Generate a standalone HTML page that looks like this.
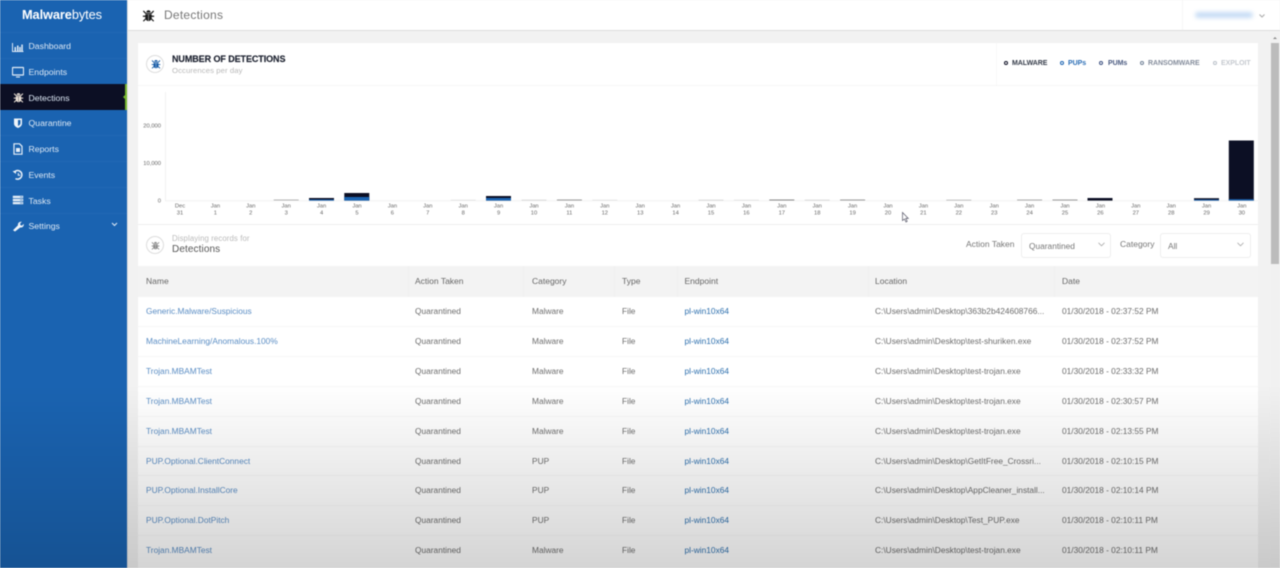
<!DOCTYPE html>
<html><head><meta charset="utf-8"><title>Detections</title>
<style>
html,body{margin:0;padding:0;width:1280px;height:568px;overflow:hidden;background:#f2f2f2;font-family:"Liberation Sans",sans-serif}
#w{position:absolute;left:0;top:0;width:1280px;height:568px;overflow:hidden;filter:blur(.45px)}
.a{position:absolute;white-space:nowrap}
#side{position:absolute;left:0;top:0;width:127px;height:568px;background:#1a63b1}
.n{position:absolute;left:28.5px;font-size:8.7px;color:#dce8f5;line-height:12px}
.d{position:absolute;left:0;width:127px;height:1px;background:#2169b5}
.ic{position:absolute;left:12px;width:12px;height:12px}
.h{position:absolute;font-size:8.5px;color:#666;top:276px;line-height:10px}
.c{position:absolute;font-size:8.35px;color:#6d6d6d;line-height:10px;white-space:nowrap}
.l{color:#5a8dc4}.e{color:#2c6fae}
.r{position:absolute;left:138px;width:1120px;height:1px;background:#f7f7f7}
.s{position:absolute;top:266px;width:1px;height:31px;background:#f0f0f0}
.lg{position:absolute;top:60px;font-size:7px;font-weight:bold;line-height:8px;white-space:nowrap}
.dot{position:absolute;top:60.5px;width:2px;height:2px;border-radius:50%;border:1.8px solid #000;background:#fff}
.sel{position:absolute;top:233px;height:25px;background:#fff;border:1px solid #eee;border-radius:3px;box-sizing:border-box;font-size:8.35px;color:#777;line-height:24px;padding-left:7px}
.sel svg{position:absolute;top:8px}
</style></head><body><div id="w">

<svg width="0" height="0" style="position:absolute"><defs>
<symbol id="bug" viewBox="0 0 12 12"><path d="M4 3.200a2 2 0 0 1 4 0zM3.200 3.700h5.600v1.100H3.200zM3 5.100h2.800v6.100C4.200 11 3 9.500 3 7.700zM6.200 5.100H9v2.600c0 1.800-1.200 3.300-2.800 3.500z" fill="currentColor"/><path d="M1.200 1.800l2.200 2.200M10.800 1.800L8.600 4M.8 6.700h2.400M11.200 6.700H8.800M1.200 11.200l2.300-2.200M10.800 11.200L8.500 9" stroke="currentColor" stroke-width="1.100" fill="none"/></symbol>
</defs></svg>

<!-- header -->
<div class="a" style="left:127px;top:0;width:1153px;height:31px;background:#fff;border-bottom:1px solid #ddd;box-sizing:border-box"></div>
<div class="a" style="left:1182px;top:0;width:1px;height:30px;background:#f7f7f7"></div>
<svg class="a" style="left:142px;top:9px;color:#1c1c1c" width="13" height="13"><use href="#bug" width="13" height="13"/></svg>
<div class="a" style="left:164px;top:8px;font-size:12px;line-height:15px;color:#777;letter-spacing:.25px">Detections</div>
<div class="a" style="left:1195px;top:12px;width:58px;height:6px;background:#c6dcf5;border-radius:3px;filter:blur(2px)"></div>
<svg class="a" style="left:1259px;top:14px" width="6" height="4"><path d="M.5.5L3 3 5.500.5" fill="none" stroke="#aaa"/></svg>

<!-- sidebar -->
<div id="side">
<div class="a" style="left:22px;top:7px;font-size:12.800px;line-height:16px;color:#fff;font-weight:bold;letter-spacing:-.1px">Malware<span style="font-weight:normal">bytes</span></div>
<div class="d" style="top:32px"></div><div class="d" style="top:58px"></div><div class="d" style="top:135px"></div><div class="d" style="top:161px"></div><div class="d" style="top:187px"></div><div class="d" style="top:213px"></div>
<div class="a" style="left:0;top:84px;width:127px;height:26px;background:#0c0f24"></div>
<div class="a" style="left:124.500px;top:84px;width:2.500px;height:26px;background:#76b82e"></div>
<div class="a" style="left:122.500px;top:95px;width:0;height:0;border:2.500px solid transparent;border-right-color:#76b82e;border-left:0"></div>

<svg class="ic" style="top:41px" viewBox="0 0 12 12"><path d="M.5 2v8.500h11" fill="none" stroke="#dce8f5"/><path d="M2.500 6h1.500v4H2.500zM5 4.500h1.500V10H5zM7.200 6h1.500v4H7.200zM9.300 3.500h1.500V10H9.300z" fill="#dce8f5"/></svg>
<div class="n" style="top:40px">Dashboard</div>
<svg class="ic" style="top:66px" viewBox="0 0 12 12"><path d="M1 1.500h10a.6.6 0 0 1 .6.6v6.300a.6.600 0 0 1-.6.6H1a.6.600 0 0 1-.6-.6V2.100A.6.600 0 0 1 1 1.500z" fill="none" stroke="#e6eff8" stroke-width="1.300"/><path d="M4 10.500h4v1H4z" fill="#e6eff8"/></svg>
<div class="n" style="top:66px">Endpoints</div>
<svg class="ic" style="top:92px;left:12.500px;color:#f0e6da" width="11" height="11"><use href="#bug" width="11" height="11"/></svg>
<div class="n" style="top:92px">Detections</div>
<svg class="ic" style="top:117px" viewBox="0 0 12 12"><path d="M2 1.500h8v5c0 2.200-1.800 3.600-4 4.500-2.200-.9-4-2.300-4-4.500z" fill="#eef4fa"/><path d="M6 3h2.500v3.300C8.500 7.500 7.300 8.400 6 9z" fill="#1a63b1"/></svg>
<div class="n" style="top:117px">Quarantine</div>
<svg class="ic" style="top:143px" viewBox="0 0 12 12"><path d="M2 .8h5.500L10 3.300V11.200H2z" fill="none" stroke="#e6eff8" stroke-width="1.200"/><path d="M4 5h4v4H4z" fill="#e6eff8"/></svg>
<div class="n" style="top:143px">Reports</div>
<svg class="ic" style="top:169px" viewBox="0 0 12 12"><path d="M2 3.500A4.300 4.300 0 1 1 3.500 9.600" fill="none" stroke="#eef4fa" stroke-width="1.500"/><path d="M.5 2h3.500v3z" fill="#eef4fa"/><path d="M6.300 4v2.300h2" fill="none" stroke="#eef4fa"/></svg>
<div class="n" style="top:169px">Events</div>
<svg class="ic" style="top:194px" viewBox="0 0 12 12"><path d="M.8 1.800h10.400v2.300H.8zM.8 4.900h10.400v2.300H.8zM.8 8h10.400v2.300H.8z" fill="#e6eff8"/><path d="M8 2.400h2.500v1H8zM8 5.500h2.500v1H8zM8 8.600h2.500v1H8z" fill="#7fa8d5"/></svg>
<div class="n" style="top:195px">Tasks</div>
<svg class="ic" style="top:220px" viewBox="0 0 12 12"><path d="M1 10.200L6 5.300C5.500 3.400 7.300 1.200 9.800 1.800L8 3.700l.5 1.500 1.500.4 1.700-1.700c.5 2.400-1.500 4-3.500 3.600L3 11.500z" fill="#eef4fa"/></svg>
<div class="n" style="top:220px">Settings</div>
<svg class="a" style="left:110.500px;top:222px" width="7" height="5"><path d="M1 1l2.500 2.500L6 1" fill="none" stroke="#dce8f5" stroke-width="1.100"/></svg>
</div>
<div class="a" style="left:127px;top:0;width:1px;height:568px;background:#e2e2e2"></div>

<!-- scrollbar -->
<div class="a" style="left:1270px;top:32px;width:10px;height:536px;background:#f1f1f1"></div>
<div class="a" style="left:1270.500px;top:43px;width:8.500px;height:221px;background:#bcbcbc"></div>
<div class="a" style="left:1272.500px;top:37px;width:0;height:0;border:2.500px solid transparent;border-bottom-color:#888;border-top:0"></div>

<!-- card -->
<div class="a" style="left:138px;top:43px;width:1120px;height:525px;background:#fff"></div>
<div class="a" style="left:138px;top:85px;width:1120px;height:1px;background:#f6f6f6"></div>
<div class="a" style="left:996px;top:43px;width:1px;height:42px;background:#f8f8f8"></div>
<div class="a" style="left:146px;top:55px;width:18px;height:18px;border:1px solid #ddd;border-radius:50%;box-sizing:border-box"></div>
<svg class="a" style="left:150.500px;top:58.500px;color:#1a5ea8" width="10" height="10"><use href="#bug" width="10" height="10"/></svg>
<div class="a" style="left:172px;top:54px;font-size:9px;line-height:11px;font-weight:bold;color:#1d2230;letter-spacing:-.08px;-webkit-text-stroke:.15px #1d2230">NUMBER OF DETECTIONS</div>
<div class="a" style="left:172px;top:66px;font-size:7.700px;line-height:9px;color:#b9b9b9;letter-spacing:.1px">Occurences per day</div>

<div class="dot" style="left:1003.700px;border-color:#0c0f24"></div><div class="lg" style="left:1012px;color:#333a48;letter-spacing:-.05px">MALWARE</div>
<div class="dot" style="left:1059.700px;border-color:#1a63b1"></div><div class="lg" style="left:1068px;color:#2a6db5;letter-spacing:-.05px">PUPs</div>
<div class="dot" style="left:1099px;border-color:#3b4f80"></div><div class="lg" style="left:1108px;color:#4a5a80;letter-spacing:-.05px">PUMs</div>
<div class="dot" style="left:1139.700px;border-color:#708096"></div><div class="lg" style="left:1148px;color:#858d9c;letter-spacing:-.05px">RANSOMWARE</div>
<div class="dot" style="left:1212.700px;border-color:#b9c0c9"></div><div class="lg" style="left:1221px;color:#c5c9cf;letter-spacing:-.05px">EXPLOIT</div>

<!-- chart -->
<svg class="a" style="left:0;top:0" width="1280" height="225" font-family="Liberation Sans, sans-serif">
<path d="M165.500 92V200.700H1258" fill="none" stroke="#f2f2f2"/>
<g font-size="5.800" fill="#666" text-anchor="end"><text x="161" y="127.500">20,000</text><text x="161" y="165">10,000</text><text x="161" y="202.500">0</text></g>
<g fill="#b5b5b5">
<rect x="273.700" y="199.500" width="25" height="1"/><rect x="450.700" y="199.800" width="25" height=".7" fill="#ddd"/><rect x="521.500" y="199.800" width="25" height=".7" fill="#ccc"/><rect x="556.900" y="199.500" width="25" height="1" fill="#999"/><rect x="592.300" y="199.800" width="25" height=".7" fill="#ddd"/><rect x="698.500" y="199.800" width="25" height=".7" fill="#ccc"/><rect x="733.900" y="199.800" width="25" height=".7" fill="#ddd"/><rect x="769.300" y="199.500" width="25" height="1" fill="#888"/><rect x="804.700" y="199.800" width="25" height=".7" fill="#ccc"/><rect x="840.100" y="199.500" width="25" height="1" fill="#999"/><rect x="946.300" y="199.800" width="25" height=".7" fill="#aaa"/><rect x="1017.100" y="199.500" width="25" height="1" fill="#aaa"/><rect x="1052.500" y="199.500" width="25" height="1" fill="#999"/>
</g>
<rect x="309" y="198" width="25" height="2.600" fill="#0c0f24"/><rect x="309" y="199.500" width="25" height="1.100" fill="#1a63b1"/>
<rect x="344.300" y="193" width="25" height="7.600" fill="#0c0f24"/><rect x="344.300" y="197" width="25" height="3.600" fill="#1a63b1"/>
<rect x="486" y="196" width="25" height="4.600" fill="#0c0f24"/><rect x="486" y="198" width="25" height="2.600" fill="#1a63b1"/>
<rect x="1087.500" y="198" width="25" height="2.600" fill="#0c0f24"/>
<rect x="1194" y="198.200" width="25" height="2.400" fill="#0c0f24"/><rect x="1194" y="199.600" width="25" height="1" fill="#1a63b1"/>
<rect x="1228.800" y="140.500" width="25" height="60.100" fill="#0c0f24"/><rect x="1228.800" y="199.200" width="25" height="1.400" fill="#1a63b1"/>
<g font-size="5.800" fill="#666" text-anchor="middle">
<text x="180" y="207.500">Dec</text><text x="180" y="214.500">31</text>
<text x="215.400" y="207.500">Jan</text><text x="215.400" y="214.500">1</text>
<text x="250.800" y="207.500">Jan</text><text x="250.800" y="214.500">2</text>
<text x="286.200" y="207.500">Jan</text><text x="286.200" y="214.500">3</text>
<text x="321.600" y="207.500">Jan</text><text x="321.600" y="214.500">4</text>
<text x="357" y="207.500">Jan</text><text x="357" y="214.500">5</text>
<text x="392.400" y="207.500">Jan</text><text x="392.400" y="214.500">6</text>
<text x="427.800" y="207.500">Jan</text><text x="427.800" y="214.500">7</text>
<text x="463.200" y="207.500">Jan</text><text x="463.200" y="214.500">8</text>
<text x="498.600" y="207.500">Jan</text><text x="498.600" y="214.500">9</text>
<text x="534" y="207.500">Jan</text><text x="534" y="214.500">10</text>
<text x="569.400" y="207.500">Jan</text><text x="569.400" y="214.500">11</text>
<text x="604.800" y="207.500">Jan</text><text x="604.800" y="214.500">12</text>
<text x="640.200" y="207.500">Jan</text><text x="640.200" y="214.500">13</text>
<text x="675.600" y="207.500">Jan</text><text x="675.600" y="214.500">14</text>
<text x="711" y="207.500">Jan</text><text x="711" y="214.500">15</text>
<text x="746.400" y="207.500">Jan</text><text x="746.400" y="214.500">16</text>
<text x="781.800" y="207.500">Jan</text><text x="781.800" y="214.500">17</text>
<text x="817.200" y="207.500">Jan</text><text x="817.200" y="214.500">18</text>
<text x="852.600" y="207.500">Jan</text><text x="852.600" y="214.500">19</text>
<text x="888" y="207.500">Jan</text><text x="888" y="214.500">20</text>
<text x="923.400" y="207.500">Jan</text><text x="923.400" y="214.500">21</text>
<text x="958.800" y="207.500">Jan</text><text x="958.800" y="214.500">22</text>
<text x="994.200" y="207.500">Jan</text><text x="994.200" y="214.500">23</text>
<text x="1029.600" y="207.500">Jan</text><text x="1029.600" y="214.500">24</text>
<text x="1065" y="207.500">Jan</text><text x="1065" y="214.500">25</text>
<text x="1100.400" y="207.500">Jan</text><text x="1100.400" y="214.500">26</text>
<text x="1135.800" y="207.500">Jan</text><text x="1135.800" y="214.500">27</text>
<text x="1171.200" y="207.500">Jan</text><text x="1171.200" y="214.500">28</text>
<text x="1206.600" y="207.500">Jan</text><text x="1206.600" y="214.500">29</text>
<text x="1241.800" y="207.500">Jan</text><text x="1241.800" y="214.500">30</text>
</g>
<path d="M902.500 212.500v8l2-1.500 1.500 3 1.200-.6-1.400-3h2.500z" fill="#fff" stroke="#556" stroke-width=".7"/>
</svg>

<!-- filter row -->
<div class="a" style="left:138px;top:224px;width:1120px;height:1px;background:#eee"></div>
<div class="a" style="left:146px;top:236px;width:18px;height:18px;border:1px solid #ddd;border-radius:50%;box-sizing:border-box"></div>
<svg class="a" style="left:150.500px;top:240.500px;color:#8a8a8a" width="9" height="9"><use href="#bug" width="9" height="9"/></svg>
<div class="a" style="left:172px;top:233.500px;font-size:7.800px;line-height:10px;color:#bbb;letter-spacing:.1px">Displaying records for</div>
<div class="a" style="left:172px;top:244px;font-size:10px;line-height:12px;color:#555;letter-spacing:.1px">Detections</div>
<div class="a" style="left:966px;top:239px;font-size:8.500px;line-height:11px;color:#777">Action Taken</div>
<div class="sel" style="left:1021px;width:90px">Quarantined<svg style="left:76px" width="7" height="5"><path d="M.5.8L3.500 3.800 6.500.8" fill="none" stroke="#aaa" stroke-width=".8"/></svg></div>
<div class="a" style="left:1120px;top:239px;font-size:8.500px;line-height:11px;color:#777">Category</div>
<div class="sel" style="left:1160px;width:91px">All<svg style="left:76px" width="7" height="5"><path d="M.5.8L3.500 3.800 6.500.8" fill="none" stroke="#aaa" stroke-width=".8"/></svg></div>

<!-- table -->
<div class="a" style="left:138px;top:266px;width:1120px;height:31px;background:#f3f3f3"></div>
<div class="s" style="left:408px"></div><div class="s" style="left:523px"></div><div class="s" style="left:614px"></div><div class="s" style="left:677px"></div><div class="s" style="left:868px"></div><div class="s" style="left:1054px"></div>
<div class="h" style="left:146px">Name</div><div class="h" style="left:415px">Action Taken</div><div class="h" style="left:532px">Category</div><div class="h" style="left:622px">Type</div><div class="h" style="left:684.500px">Endpoint</div><div class="h" style="left:875px">Location</div><div class="h" style="left:1062px">Date</div>

<div class="r" style="top:326px"></div><div class="r" style="top:356px"></div><div class="r" style="top:386px"></div><div class="r" style="top:416px"></div><div class="r" style="top:446px"></div><div class="r" style="top:475px"></div><div class="r" style="top:505px"></div><div class="r" style="top:535px"></div>

<div class="c l" style="left:146px;top:306px">Generic.Malware/Suspicious</div><div class="c" style="left:415px;top:306px">Quarantined</div><div class="c" style="left:532px;top:306px">Malware</div><div class="c" style="left:622px;top:306px">File</div><div class="c e" style="left:684.500px;top:306px">pl-win10x64</div><div class="c" style="left:875px;top:306px">C:\Users\admin\Desktop\363b2b424608766...</div><div class="c" style="left:1062px;top:306px">01/30/2018 - 02:37:52 PM</div>

<div class="c l" style="left:146px;top:336px">MachineLearning/Anomalous.100%</div><div class="c" style="left:415px;top:336px">Quarantined</div><div class="c" style="left:532px;top:336px">Malware</div><div class="c" style="left:622px;top:336px">File</div><div class="c e" style="left:684.500px;top:336px">pl-win10x64</div><div class="c" style="left:875px;top:336px">C:\Users\admin\Desktop\test-shuriken.exe</div><div class="c" style="left:1062px;top:336px">01/30/2018 - 02:37:52 PM</div>

<div class="c l" style="left:146px;top:366px">Trojan.MBAMTest</div><div class="c" style="left:415px;top:366px">Quarantined</div><div class="c" style="left:532px;top:366px">Malware</div><div class="c" style="left:622px;top:366px">File</div><div class="c e" style="left:684.500px;top:366px">pl-win10x64</div><div class="c" style="left:875px;top:366px">C:\Users\admin\Desktop\test-trojan.exe</div><div class="c" style="left:1062px;top:366px">01/30/2018 - 02:33:32 PM</div>

<div class="c l" style="left:146px;top:396px">Trojan.MBAMTest</div><div class="c" style="left:415px;top:396px">Quarantined</div><div class="c" style="left:532px;top:396px">Malware</div><div class="c" style="left:622px;top:396px">File</div><div class="c e" style="left:684.500px;top:396px">pl-win10x64</div><div class="c" style="left:875px;top:396px">C:\Users\admin\Desktop\test-trojan.exe</div><div class="c" style="left:1062px;top:396px">01/30/2018 - 02:30:57 PM</div>

<div class="c l" style="left:146px;top:426px">Trojan.MBAMTest</div><div class="c" style="left:415px;top:426px">Quarantined</div><div class="c" style="left:532px;top:426px">Malware</div><div class="c" style="left:622px;top:426px">File</div><div class="c e" style="left:684.500px;top:426px">pl-win10x64</div><div class="c" style="left:875px;top:426px">C:\Users\admin\Desktop\test-trojan.exe</div><div class="c" style="left:1062px;top:426px">01/30/2018 - 02:13:55 PM</div>

<div class="c l" style="left:146px;top:455.500px">PUP.Optional.ClientConnect</div><div class="c" style="left:415px;top:455.500px">Quarantined</div><div class="c" style="left:532px;top:455.500px">PUP</div><div class="c" style="left:622px;top:455.500px">File</div><div class="c e" style="left:684.500px;top:455.500px">pl-win10x64</div><div class="c" style="left:875px;top:455.500px">C:\Users\admin\Desktop\GetItFree_Crossri...</div><div class="c" style="left:1062px;top:455.500px">01/30/2018 - 02:10:15 PM</div>

<div class="c l" style="left:146px;top:485px">PUP.Optional.InstallCore</div><div class="c" style="left:415px;top:485px">Quarantined</div><div class="c" style="left:532px;top:485px">PUP</div><div class="c" style="left:622px;top:485px">File</div><div class="c e" style="left:684.500px;top:485px">pl-win10x64</div><div class="c" style="left:875px;top:485px">C:\Users\admin\Desktop\AppCleaner_install...</div><div class="c" style="left:1062px;top:485px">01/30/2018 - 02:10:14 PM</div>

<div class="c l" style="left:146px;top:515px">PUP.Optional.DotPitch</div><div class="c" style="left:415px;top:515px">Quarantined</div><div class="c" style="left:532px;top:515px">PUP</div><div class="c" style="left:622px;top:515px">File</div><div class="c e" style="left:684.500px;top:515px">pl-win10x64</div><div class="c" style="left:875px;top:515px">C:\Users\admin\Desktop\Test_PUP.exe</div><div class="c" style="left:1062px;top:515px">01/30/2018 - 02:10:11 PM</div>

<div class="c l" style="left:146px;top:545px">Trojan.MBAMTest</div><div class="c" style="left:415px;top:545px">Quarantined</div><div class="c" style="left:532px;top:545px">Malware</div><div class="c" style="left:622px;top:545px">File</div><div class="c e" style="left:684.500px;top:545px">pl-win10x64</div><div class="c" style="left:875px;top:545px">C:\Users\admin\Desktop\test-trojan.exe</div><div class="c" style="left:1062px;top:545px">01/30/2018 - 02:10:11 PM</div>

<!-- bottom shadow -->
<div class="a" style="left:0;top:385px;width:1280px;height:183px;background:linear-gradient(to bottom,rgba(0,0,0,0),rgba(0,0,0,.17))"></div>
</div></body></html>
